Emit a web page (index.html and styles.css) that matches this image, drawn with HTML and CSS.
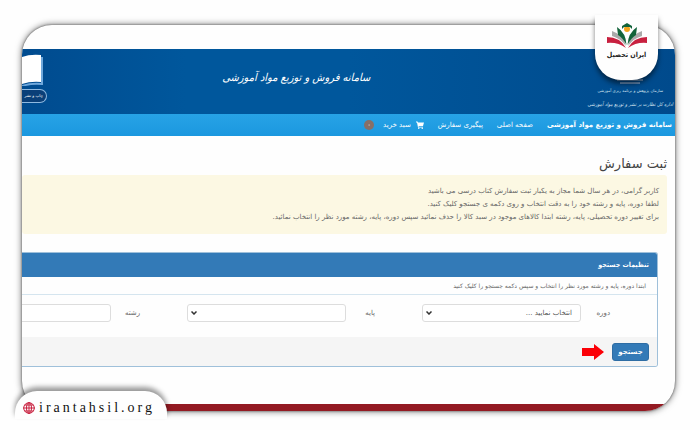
FILE: index.html
```html
<!DOCTYPE html>
<html lang="fa" dir="rtl">
<head>
    <meta charset="UTF-8">
    <meta name="viewport" content="width=device-width, initial-scale=1.0">
    <title>ثبت سفارش</title>
    <link rel="stylesheet" href="styles.css">
</head>
<body>
    <div class="frame">
        <div class="card">
            <header class="banner">
                <div class="org">
                    <svg class="org-mark" width="28" height="8" viewBox="0 0 28 8">
                        <path d="M1 3h26M4 6h20" stroke="#5f88b4" stroke-width="2"/>
                    </svg>
                    <span class="org-parent">سازمان پژوهش و برنامه ریزی آموزشی</span>
                    <span class="org-name">اداره کل نظارت بر نشر و توزیع مواد آموزشی</span>
                </div>
                <div class="banner-title">سامانه فروش و توزیع مواد آموزشی</div>
                <div class="book">
                    <svg width="22" height="32" viewBox="0 0 22 32">
                        <path d="M0 3Q8 0 19 1V28Q9 27 0 30Z" fill="#fff"/>
                        <path d="M20 3V30Q9 29 0 32" fill="none" stroke="#6fa8dc" stroke-width="2"/>
                    </svg>
                    <span class="book-label">چاپ و نشر</span>
                </div>
            </header>
            <nav class="navbar">
                <a class="brand" href="#">سامانه فروش و توزیع مواد آموزشی</a>
                <a href="#">صفحه اصلی</a>
                <a href="#">پیگیری سفارش</a>
                <a class="cart" href="#">
                    <svg width="8" height="8" viewBox="0 0 16 16" fill="#fff">
                        <path d="M0 1h3l1 2h12l-2 7H5l.5 1.500H14V13H4L2 3H0z"/>
                        <circle cx="5.500" cy="14.500" r="1.500"/>
                        <circle cx="12.500" cy="14.500" r="1.500"/>
                    </svg>
                    سبد خرید
                    <span class="count">۰</span>
                </a>
            </nav>
            <main class="content">
                <h1>ثبت سفارش</h1>
                <div class="notice">
                    <p>کاربر گرامی، در هر سال شما مجاز به یکبار ثبت سفارش کتاب درسی می باشید</p>
                    <p>لطفا دوره، پایه و رشته خود را به دقت انتخاب و روی دکمه ی جستجو کلیک کنید.</p>
                    <p>برای تغییر دوره تحصیلی، پایه، رشته ابتدا کالاهای موجود در سبد کالا را حذف نمائید سپس دوره، پایه، رشته مورد نظر را انتخاب نمائید.</p>
                </div>
                <form class="panel">
                    <h2>تنظیمات جستجو</h2>
                    <p class="hint">ابتدا دوره، پایه و رشته مورد نظر را انتخاب و سپس دکمه جستجو را کلیک کنید</p>
                    <div class="fields">
                        <div class="field">
                            <label for="period">دوره</label>
                            <select id="period"><option>انتخاب نمایید ...</option></select>
                        </div>
                        <div class="field">
                            <label for="grade">پایه</label>
                            <select id="grade"><option></option></select>
                        </div>
                        <div class="field">
                            <label for="major">رشته</label>
                            <select id="major"><option></option></select>
                        </div>
                    </div>
                    <div class="panel-footer">
                        <button type="button">جستجو</button>
                        <svg width="22" height="16" viewBox="0 0 22 16">
                            <path d="M0 4h12V0l10 8-10 8v-4H0z" fill="#fb0007"/>
                        </svg>
                    </div>
                </form>
            </main>
            <div class="bottom-bar"></div>
        </div>

        <div class="logo-tag">
            <svg width="42" height="26" viewBox="0 0 42 26">
                <path d="M1 14Q14 14 20 25Q12 19 1 20Z" fill="#c8203f"/>
                <path d="M41 14Q28 14 22 25Q30 19 41 20Z" fill="#c8203f"/>
                <path d="M6 8Q18 12 20 23Q14 15 6 13Z" fill="#aaa"/>
                <path d="M36 8Q24 12 22 23Q28 15 36 13Z" fill="#aaa"/>
                <path d="M11 4Q20 10 20.500 22Q17 15 12 12Z" fill="#12633a"/>
                <path d="M31 4Q22 10 21.500 22Q25 15 30 12Z" fill="#12633a"/>
                <circle cx="21" cy="6" r="3" fill="#f3a51d"/>
                <path d="M16 3l5-3 5 3v3l-2-2h-6l-2 2z" fill="#12633a"/>
            </svg>
            <span>ایران تحصیل</span>
        </div>

        <a class="site-tag" href="#" dir="ltr">
            <svg width="12" height="12" viewBox="0 0 12 12" fill="none" stroke="#c8203f">
                <circle cx="6" cy="6" r="5.300"/>
                <ellipse cx="6" cy="6" rx="2.500" ry="5.300"/>
                <path d="M6 0v12M0 6h12M1.500 3h9M1.500 9h9"/>
            </svg>
            <span>irantahsil.org</span>
        </a>
    </div>
</body>
</html>
```
FILE: styles.css
```css
* {
    box-sizing: border-box;
}
body {
    margin: 0;
    background-color: #fefefe;
    font-family: "DejaVu Sans", sans-serif;
    font-size: 7px;
    color: #666;
}
a {
    color: inherit;
    text-decoration: none;
}
h1, h2, p {
    margin: 0;
}
.frame {
    position: relative;
    padding: 25px 25px 19px 22px;
}
.card {
    overflow: hidden;
    padding-top: 24px;
    border-radius: 30px;
    background-color: #fefefe;
    box-shadow: 0 0 2px #555, 0 0 7px rgba(0, 0, 0, 0.6);
}
.bottom-bar {
    height: 7px;
    background-color: #931a22;
}

/* header */
.banner {
    display: flex;
    justify-content: space-between;
    height: 65px;
    background: linear-gradient(to left, #004a8c, #00579c 50%, #00579c 75%, #004b8f);
    color: #fff;
}
.org {
    display: flex;
    flex-direction: column;
    align-items: center;
    justify-content: flex-end;
    padding: 0 2px 3px 0;
    white-space: nowrap;
    color: #d5e3f0;
}
.org-parent {
    font-size: 4px;
    line-height: 12px;
}
.org-name {
    font-family: "DejaVu Sans Condensed", "DejaVu Sans", sans-serif;
    font-size: 5px;
    font-style: italic;
    line-height: 14px;
}
.banner-title {
    flex: 1;
    padding: 17px 42px 0 0;
    text-align: center;
    font-family: "DejaVu Sans Condensed", "DejaVu Sans", sans-serif;
    font-size: 11px;
    font-style: italic;
    line-height: 24px;
    white-space: nowrap;
}
.book {
    display: flex;
    flex-direction: column;
    align-items: flex-end;
    width: 25px;
    padding-top: 5px;
}
.book-label {
    width: 25px;
    margin-top: 3px;
    padding-right: 3px;
    border: 1px solid #8fb9e0;
    border-left: 0;
    border-radius: 0 7px 7px 0;
    background-color: #0a3f78;
    font-size: 4px;
    line-height: 12px;
    white-space: nowrap;
}
.navbar {
    display: flex;
    align-items: center;
    gap: 14px;
    height: 22px;
    padding-right: 3px;
    background: linear-gradient(#27a3e6, #1b98df);
    color: #fff;
    white-space: nowrap;
}
.brand {
    font-weight: bold;
}
.cart {
    display: flex;
    align-items: center;
    gap: 5px;
}
.count {
    width: 10px;
    margin-right: 4px;
    border-radius: 5px;
    background-color: #876f67;
    text-align: center;
    line-height: 10px;
}

/* order form */
.content {
    padding: 17px 8px 37px 0;
}
h1 {
    font-size: 13px;
    font-weight: normal;
    line-height: 22px;
    color: #444;
}
.notice {
    padding: 10px 8px;
    border-radius: 3px;
    background-color: #fcf8e3;
    line-height: 13px;
}
.panel {
    margin: 18px 9px 0 0;
    overflow: hidden;
    border: 1px solid #9fc0da;
    border-left: 0;
    border-radius: 0 3px 3px 0;
}
h2 {
    padding-right: 8px;
    background-color: #337ab7;
    font-family: "DejaVu Sans Condensed", "DejaVu Sans", sans-serif;
    font-size: 7px;
    line-height: 24px;
    color: #fff;
}
.hint {
    padding-right: 11px;
    border-bottom: 1px solid #d5e5ef;
    font-size: 6px;
    line-height: 17px;
}
.fields {
    display: grid;
    grid-template-columns: repeat(3, 37%);
    padding: 9px 0 15px;
}
.field {
    display: flex;
    align-items: center;
}
label {
    width: 76px;
    padding-right: 47px;
}
select {
    flex: 1;
    min-width: 0;
    height: 18px;
    padding: 0 8px;
    border: 1px solid #ddd;
    border-radius: 3px;
    appearance: none;
    background: #fff url("data:image/svg+xml,%3Csvg xmlns='http://www.w3.org/2000/svg' width='6' height='4'%3E%3Cpath d='M.5.5L3 3 5.500.5' fill='none' stroke='%23333' stroke-width='1.500'/%3E%3C/svg%3E") no-repeat 3px center;
    font: inherit;
    color: #555;
}
.panel-footer {
    display: flex;
    align-items: center;
    gap: 8px;
    padding: 6px 8px 5px;
    background-color: #f5f5f5;
}
button {
    width: 37px;
    height: 18px;
    padding: 0;
    border: 1px solid #2e6da4;
    border-radius: 3px;
    background-color: #337ab7;
    font: bold 7px "DejaVu Sans", sans-serif;
    color: #fff;
}

/* tags lying over the card */
.logo-tag {
    position: absolute;
    top: 15px;
    right: 42px;
    display: flex;
    flex-direction: column;
    align-items: center;
    width: 63px;
    height: 65px;
    padding-top: 8px;
    border-radius: 0 0 26px 26px;
    background-color: #fefefe;
    box-shadow: 0 4px 5px rgba(0, 0, 0, 0.5);
    font-family: "DejaVu Sans Condensed", "DejaVu Sans", sans-serif;
    font-size: 7px;
    font-weight: bold;
    line-height: 12px;
    white-space: nowrap;
    color: #222;
}
.site-tag {
    position: absolute;
    bottom: 11px;
    left: 15px;
    display: flex;
    align-items: center;
    gap: 4px;
    height: 28px;
    padding: 6px 12px 0 8px;
    border-radius: 22px 22px 0 0;
    background-color: #fefefe;
    box-shadow: 0 -4px 5px rgba(0, 0, 0, 0.4);
    font-family: "Liberation Serif", serif;
    font-size: 14px;
    letter-spacing: 3px;
    color: #111;
}
```
